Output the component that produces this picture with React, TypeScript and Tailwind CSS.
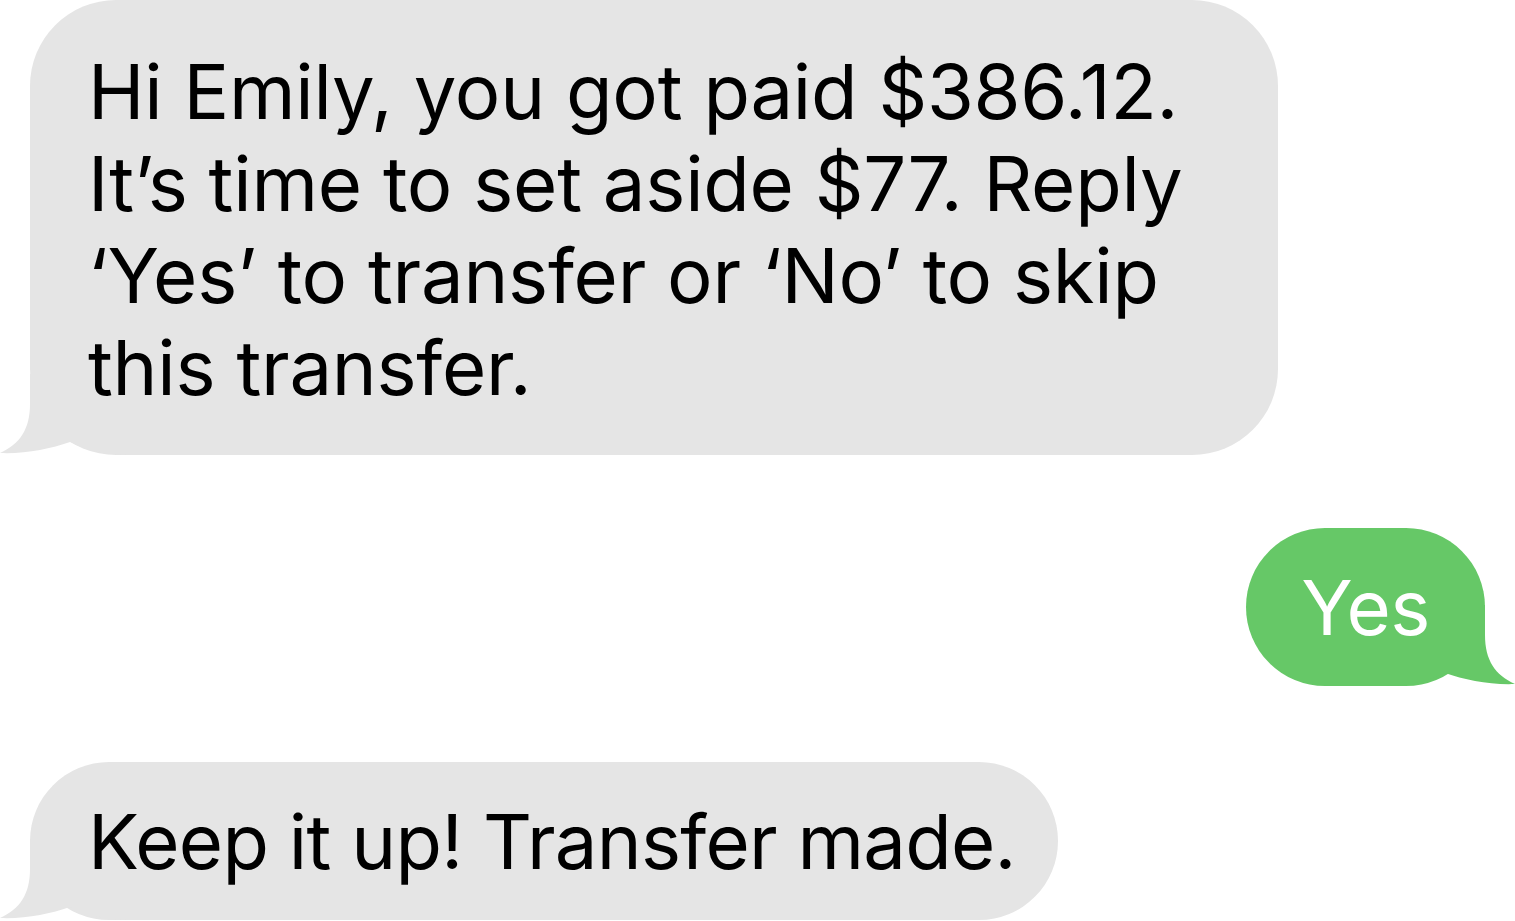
import React from "react";

function LeftTail({ color }: { color: string }) {
  return (
    <svg
      className="absolute left-[-30px] bottom-0"
      width="130"
      height="81"
      viewBox="0 0 130 81"
    >
      <path
        d="M30 0 L30 30 C30 55 20 70 0 79 C25 80 50 75 70 68 C90 78 110 80 130 81 L130 0 Z"
        fill={color}
      />
    </svg>
  );
}

function RightTail({ color }: { color: string }) {
  return (
    <svg
      className="absolute right-[-30px] bottom-0"
      width="130"
      height="81"
      viewBox="0 0 130 81"
    >
      <path
        d="M100 0 L100 30 C100 55 110 70 130 79 C105 80 80 75 60 68 C40 78 20 80 0 81 L0 0 Z"
        fill={color}
      />
    </svg>
  );
}

export default function App() {
  return (
    <div
      className="w-[1515px] h-[921px] bg-white overflow-hidden flex flex-col"
      style={{ fontFamily: "Inter, 'Liberation Sans', sans-serif" }}
    >
      <div className="relative ml-[30px] w-[1248px] h-[455px] bg-[#e5e5e5] rounded-[86px] pl-[58px] pt-[45px] text-[76px] leading-[92px] text-black tracking-[-0.25px]">
        <LeftTail color="#e5e5e5" />
        <div className="relative">
          <div>Hi Emily, you got paid $386.12.</div>
          <div>It’s time to set aside $77. Reply</div>
          <div>‘Yes’ to transfer or ‘No’ to skip</div>
          <div>this transfer.</div>
        </div>
      </div>

      <div className="flex justify-end mt-[73px] pr-[30px]">
        <div className="relative w-[239px] h-[158px] bg-[#66c867] rounded-[80px] flex items-center justify-center text-[76px] text-white tracking-[-0.6px]">
          <RightTail color="#66c867" />
          <span className="relative">Yes</span>
        </div>
      </div>

      <div className="mt-[76px] ml-[30px]">
        <div className="relative w-[1028px] h-[158px] bg-[#e5e5e5] rounded-[80px] flex items-center pl-[58px] text-[76px] text-black tracking-[-0.75px]">
          <LeftTail color="#e5e5e5" />
          <span className="relative">Keep it up! Transfer made.</span>
        </div>
      </div>
    </div>
  );
}
